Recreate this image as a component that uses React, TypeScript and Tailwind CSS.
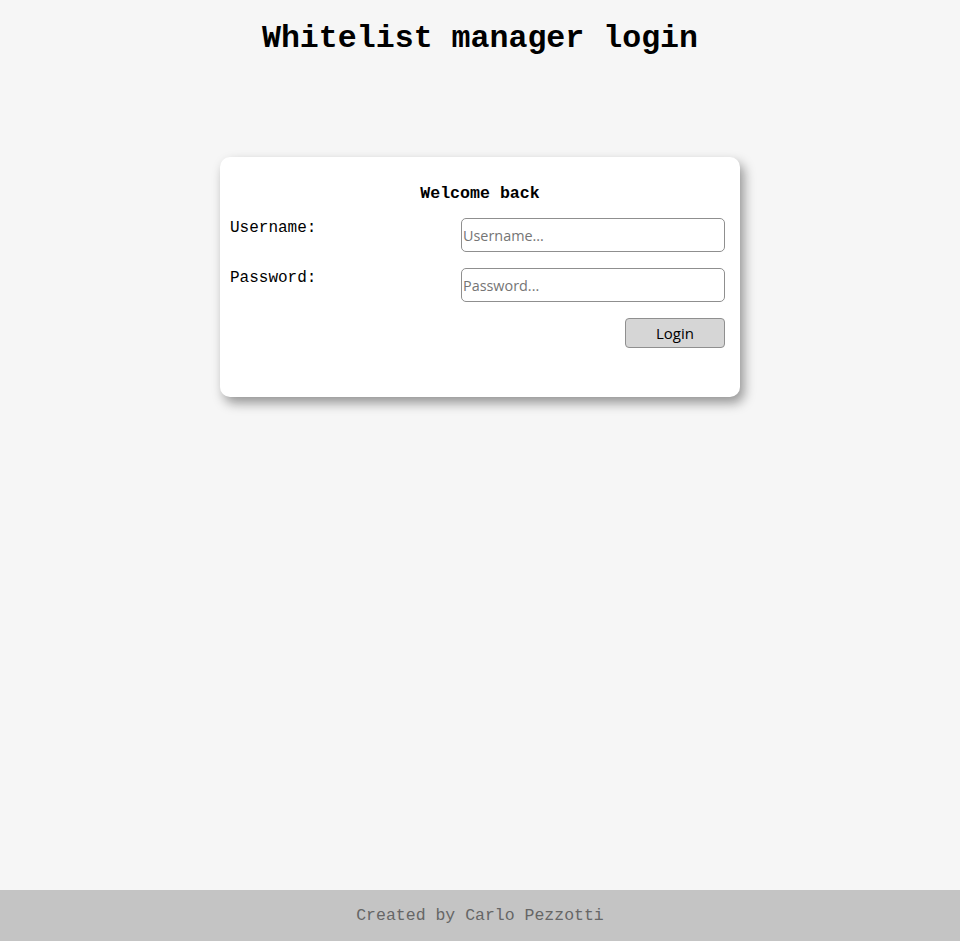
export default function App() {
  return (
    <div className="min-h-screen flex flex-col bg-[#f6f6f6] text-black font-['Liberation_Mono',monospace]">
      <main className="flex-1 flex flex-col items-center">
        <h1 className="mt-[21px] text-[31.6px] leading-[36px] font-bold">Whitelist manager login</h1>

        <div className="mt-[100px] w-[520px] bg-white rounded-[10px] shadow-[4px_6px_12px_rgba(0,0,0,0.4)] pt-[28px] pb-[49px] pl-[10px] pr-[15px]">
          <h3 className="pl-[5px] text-center text-[16.6px] leading-[18px] font-bold">Welcome back</h3>

          <form className="mt-[15px] flex flex-col gap-[16px]" onSubmit={(e) => e.preventDefault()}>
            <div className="flex justify-between items-start">
              <label className="pt-[1px] text-[16px] leading-[18px]">Username:</label>
              <input
                type="text"
                placeholder="Username..."
                className="w-[264px] h-[34px] px-[1px] border border-[#8f8f8f] rounded-[5px] text-[14.4px] font-['Open_Sans',sans-serif] placeholder:text-[#757575] outline-none"
              />
            </div>
            <div className="flex justify-between items-start">
              <label className="pt-[1px] text-[16px] leading-[18px]">Password:</label>
              <input
                type="password"
                placeholder="Password..."
                className="w-[264px] h-[34px] px-[1px] border border-[#8f8f8f] rounded-[5px] text-[14.4px] font-['Open_Sans',sans-serif] placeholder:text-[#757575] outline-none"
              />
            </div>
            <div className="flex justify-end">
              <button
                type="submit"
                className="w-[100px] h-[30px] bg-[#d6d6d6] border border-[#8f8f8f] rounded-[4px] text-[15px] font-['Open_Sans',sans-serif]"
              >
                Login
              </button>
            </div>
          </form>
        </div>
      </main>

      <footer className="h-[51px] pt-[2px] bg-[#c4c4c4] flex items-center justify-center text-[16.5px] text-[#666666]">
        Created by Carlo Pezzotti
      </footer>
    </div>
  );
}
